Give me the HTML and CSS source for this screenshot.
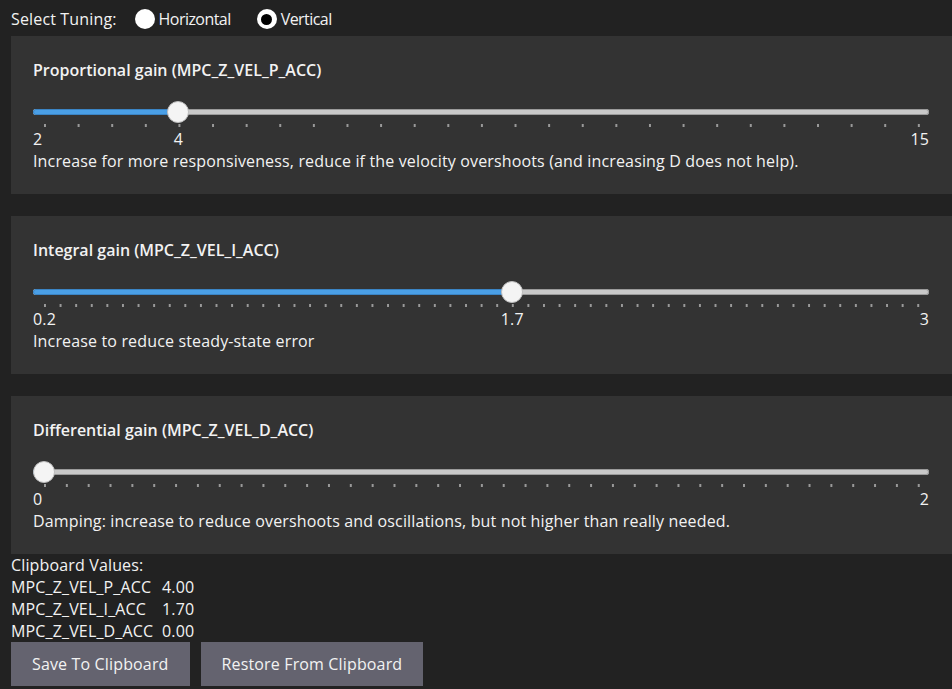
FILE: index.html
```html
<!DOCTYPE html>
<html>
<head>
<meta charset="utf-8">
<link rel="stylesheet" href="styles.css">
</head>
<body>
<div class="page">
  <div class="topbar">
    <span class="lbl">Select Tuning:</span>
    <label class="radio"><span class="dot"></span><span>Horizontal</span></label>
    <label class="radio"><span class="dot on"></span><span>Vertical</span></label>
  </div>

  <div class="panel">
    <div class="title">Proportional gain (MPC_Z_VEL_P_ACC)</div>
    <div class="slider" style="--p:0.15385">
      <div class="track"><div class="fill"></div></div>
      <div class="handle"></div>
    </div>
    <div class="ticks" style="--n:26"></div>
    <div class="labels">
      <span>2</span>
      <span class="mid" style="--p:0.15385">4</span>
      <span>15</span>
    </div>
    <div class="desc">Increase for more responsiveness, reduce if the velocity overshoots (and increasing D does not help).</div>
  </div>

  <div class="panel">
    <div class="title">Integral gain (MPC_Z_VEL_I_ACC)</div>
    <div class="slider" style="--p:0.53571">
      <div class="track"><div class="fill"></div></div>
      <div class="handle"></div>
    </div>
    <div class="ticks" style="--n:56"></div>
    <div class="labels">
      <span>0.2</span>
      <span class="mid" style="--p:0.53571">1.7</span>
      <span>3</span>
    </div>
    <div class="desc">Increase to reduce steady-state error</div>
  </div>

  <div class="panel">
    <div class="title">Differential gain (MPC_Z_VEL_D_ACC)</div>
    <div class="slider" style="--p:0">
      <div class="track"><div class="fill"></div></div>
      <div class="handle"></div>
    </div>
    <div class="ticks" style="--n:40"></div>
    <div class="labels">
      <span>0</span>
      <span>2</span>
    </div>
    <div class="desc">Damping: increase to reduce overshoots and oscillations, but not higher than really needed.</div>
  </div>

  <div class="clip">
    <div class="row">Clipboard Values:</div>
    <div class="grid">
      <span>MPC_Z_VEL_P_ACC</span><span>4.00</span>
      <span>MPC_Z_VEL_I_ACC</span><span>1.70</span>
      <span>MPC_Z_VEL_D_ACC</span><span>0.00</span>
    </div>
  </div>

  <div class="buttons">
    <button class="btn">Save To Clipboard</button>
    <button class="btn">Restore From Clipboard</button>
  </div>
</div>
</body>
</html>
```

FILE: styles.css
```css
html, body {
  margin: 0;
  padding: 0;
  background: #222222;
}
body {
  font-family: "Open Sans", "Noto Sans", sans-serif;
  font-size: 16px;
  letter-spacing: 0.15px;
  color: #f2f2f2;
  width: 952px;
  height: 689px;
  overflow: hidden;
}
.page {
  padding-left: 11px;
}
.topbar {
  height: 36px;
  display: flex;
  align-items: center;
  padding-top: 2px;
  box-sizing: border-box;
}
.topbar .lbl {
  margin-right: 18px;
}
.radio {
  display: flex;
  align-items: center;
  gap: 4px;
  margin-right: 26px;
  letter-spacing: -0.55px;
}
.dot {
  width: 20px;
  height: 20px;
  border-radius: 50%;
  background: #ffffff;
  display: flex;
  align-items: center;
  justify-content: center;
}
.dot.on::after {
  content: "";
  width: 11px;
  height: 11px;
  border-radius: 50%;
  background: #000;
}
.panel {
  background: #333333;
  height: 158px;
  box-sizing: border-box;
  padding: 24px 23px 0 22px;
  margin-bottom: 22px;
}
.panel:nth-of-type(4) {
  margin-bottom: 0;
}
.title {
  font-weight: 600;
  line-height: 20px;
  letter-spacing: 0;
}
.slider {
  position: relative;
  height: 22px;
  margin-top: 21px;
}
.track {
  position: absolute;
  left: 0;
  right: 0;
  top: 8px;
  height: 6px;
  border-radius: 3px;
  background: #c9c9c9;
  box-shadow: inset 0 0 0 1px #9a9a9a;
  overflow: hidden;
}
.fill {
  height: 100%;
  width: calc(11px + var(--p) * (100% - 22px));
  background: #4a9fe6;
  box-shadow: inset 0 0 0 1px #3b84c4;
  border-radius: 3px;
}
.handle {
  position: absolute;
  top: 0;
  left: calc(var(--p) * (100% - 22px));
  width: 22px;
  height: 22px;
  box-sizing: border-box;
  border-radius: 50%;
  background: #f4f4f4;
  border: 1px solid #bdbdbd;
}
.ticks {
  margin: 1px 9px 0 11px;
  height: 3px;
  background-image: linear-gradient(to right, #9a9a9a 0 2px, transparent 2px);
  background-size: calc((100% - 2px) / var(--n)) 3px;
  background-repeat: repeat-x;
}
.labels {
  position: relative;
  display: flex;
  justify-content: space-between;
  line-height: 20px;
  margin-top: 2px;
}
.labels .mid {
  position: absolute;
  top: 0;
  left: calc(11px + var(--p) * (100% - 22px));
  transform: translateX(-50%);
}
.desc {
  line-height: 20px;
  margin-top: 2px;
}
.clip {
  line-height: 22px;
}
.grid {
  display: grid;
  grid-template-columns: 151px auto;
  justify-content: start;
}
.buttons {
  display: flex;
  gap: 11px;
}
.btn {
  font-family: "Open Sans", "Noto Sans", sans-serif;
  font-size: 16px;
  letter-spacing: 0.15px;
  color: #f2f2f2;
  background: #64636f;
  border: none;
  height: 44px;
  padding: 0 21px;
  margin: 0;
}
```
